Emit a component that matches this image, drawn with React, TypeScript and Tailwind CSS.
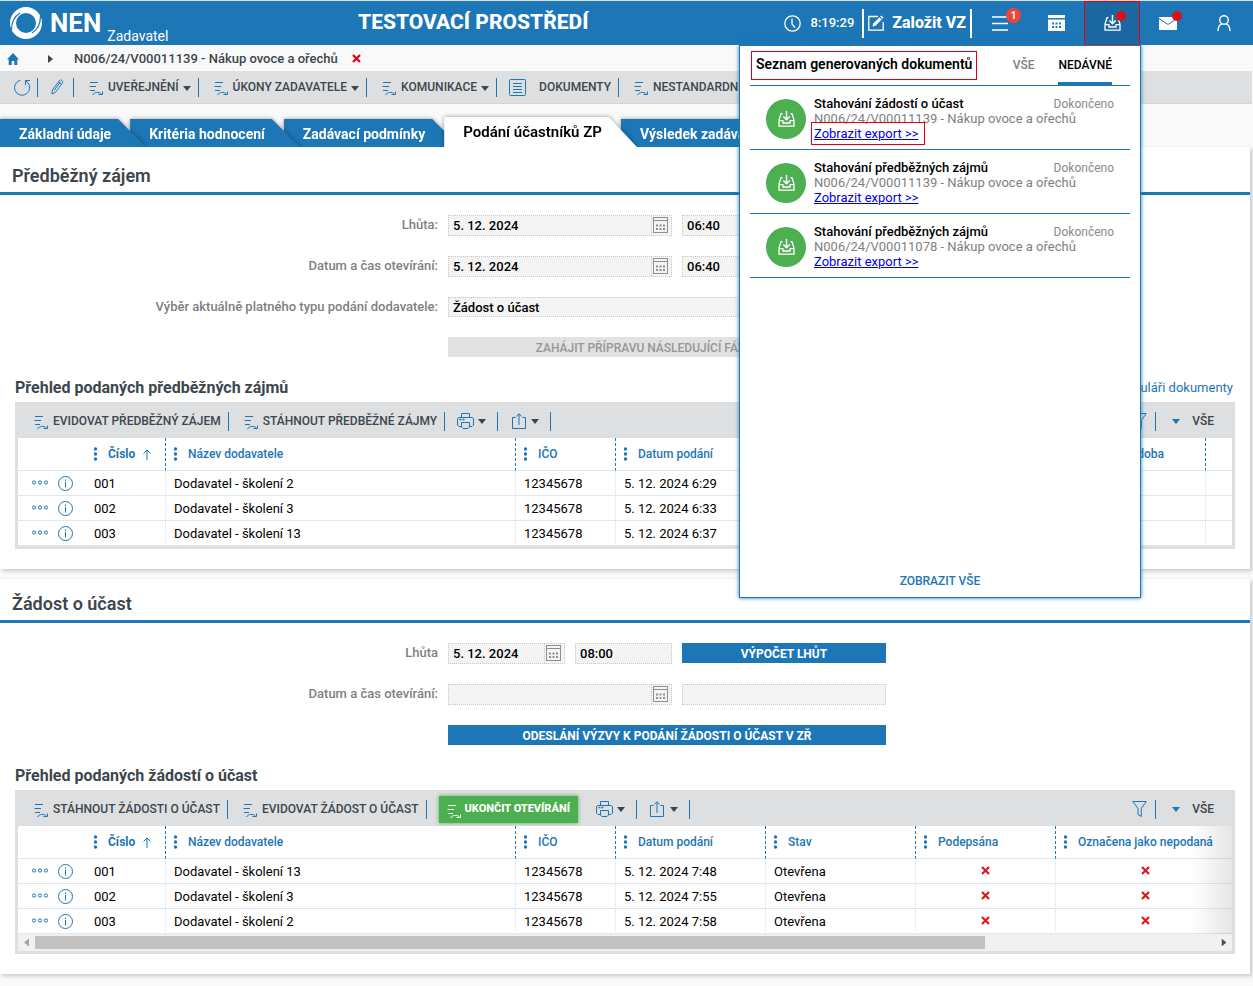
import React from 'react';
import { clsx } from 'clsx';

type IconProps = { className?: string };

const tabs = [
    { label: 'Základní údaje', layer: 'z-30' },
    { label: 'Kritéria hodnocení', layer: 'z-20' },
    { label: 'Zadávací podmínky', layer: 'z-10' },
    { label: 'Podání účastníků ZP', layer: 'z-40', active: true },
    { label: 'Výsledek zadávacího postupu', layer: 'z-0' },
];

const exportsList = [
    { title: 'Stahování žádostí o účast', subject: 'N006/24/V00011139 - Nákup ovoce a ořechů', marked: true },
    { title: 'Stahování předběžných zájmů', subject: 'N006/24/V00011139 - Nákup ovoce a ořechů', marked: false },
    { title: 'Stahování předběžných zájmů', subject: 'N006/24/V00011078 - Nákup ovoce a ořechů', marked: false },
];

const interestRows = [
    ['001', 'Dodavatel - školení 2', '12345678', '5. 12. 2024 6:29'],
    ['002', 'Dodavatel - školení 3', '12345678', '5. 12. 2024 6:33'],
    ['003', 'Dodavatel - školení 13', '12345678', '5. 12. 2024 6:37'],
];

const requestRows = [
    ['001', 'Dodavatel - školení 13', '12345678', '5. 12. 2024 7:48', 'Otevřena', 'x', 'x'],
    ['002', 'Dodavatel - školení 3', '12345678', '5. 12. 2024 7:55', 'Otevřena', 'x', 'x'],
    ['003', 'Dodavatel - školení 2', '12345678', '5. 12. 2024 7:58', 'Otevřena', 'x', 'x'],
];

/* Icons */

function LogoIcon() {
    return (
        <svg className="size-8 shrink-0" viewBox="0 0 32 32" fill="none">
            <circle cx="16" cy="16" r="13" stroke="#fff" strokeWidth="6" />
            <path d="M1.500 23C1.500 15 4 9.500 10 6" stroke="#1d76b5" strokeWidth="1.200" />
            <path d="M30.500 9C30.500 17 28 22.500 22 26" stroke="#1d76b5" strokeWidth="1.200" />
        </svg>
    );
}

function ProcessIcon({ className }: IconProps) {
    return (
        <svg className={clsx('h-[15px] w-[14px] shrink-0', className)} viewBox="0 0 14 15" fill="none" stroke="currentColor">
            <path d="M1 1.500H9M.5 5.500H7M1 9.500H6" />
            <path d="M3.500 14C5 11 10 10.500 12.500 13" />
            <path d="M13.500 10.500V13.500H9.500" />
        </svg>
    );
}

function Caret({ className }: IconProps) {
    return (
        <svg className={clsx('h-[5px] w-2 shrink-0', className)} viewBox="0 0 8 5" fill="currentColor">
            <path d="M0 0H8L4 5Z" />
        </svg>
    );
}

function CrossIcon({ className }: IconProps) {
    return (
        <svg className={clsx('size-[9px]', className)} viewBox="0 0 9 9" stroke="currentColor" strokeWidth="2.200">
            <path d="M1 1L8 8M8 1L1 8" />
        </svg>
    );
}

function TrayIcon({ className }: IconProps) {
    return (
        <svg className={clsx('h-4 w-[17px]', className)} viewBox="0 0 17 16" fill="none" stroke="currentColor" strokeWidth="1.300">
            <path d="M4.500 2.700H3L1 9V15.200H16V9L14 2.700H12.500" />
            <path d="M1 9.700H5V12H12V9.700H16" />
            <path d="M8.500 0V8.500M5.300 5.500L8.500 8.700L11.700 5.500" strokeWidth="1.500" />
        </svg>
    );
}

function ClockIcon() {
    return (
        <svg className="size-[17px]" viewBox="0 0 17 17" fill="none" stroke="currentColor" strokeWidth="1.300">
            <circle cx="8.500" cy="8.500" r="7.700" />
            <path d="M8 3.500V9L11 12.500" />
        </svg>
    );
}

function ComposeIcon() {
    return (
        <svg className="size-4" viewBox="0 0 16 16" fill="none" stroke="currentColor">
            <path d="M10 1.500H.8V15.200H15.200V7" strokeWidth="1.300" />
            <path d="M4.500 11.500L5.200 8.500L11.500 2.200L13.800 4.500L7.500 10.800Z" fill="currentColor" stroke="none" />
            <path d="M12.200 1.500L13.300 .5L15.500 2.700L14.500 3.800Z" fill="currentColor" stroke="none" />
        </svg>
    );
}

function PrinterIcon() {
    return (
        <svg className="h-4 w-[17px]" viewBox="0 0 17 16" fill="none" stroke="currentColor">
            <path d="M4.500 4V.5H12.500V4" />
            <path d="M4.500 13.500H2L.5 12V5.500L2 4.500H15L16.500 5.500V12L15 13.500H12.500" />
            <path d="M4.500 9.500H12.500V14L11 15.500H6L4.500 14Z" />
            <path d="M2.500 6.500H4.500M5.500 6.500H7.500" strokeWidth="1.500" />
        </svg>
    );
}

function ShareIcon() {
    return (
        <svg className="h-4 w-[14px]" viewBox="0 0 14 16" fill="none" stroke="currentColor">
            <path d="M3.500 4.500H.5V15.500H13.500V4.500H10.500" />
            <path d="M7 12V1M4.500 3.500L7 .7L9.500 3.500" />
        </svg>
    );
}

function FilterIcon() {
    return (
        <svg className="h-4 w-[15px]" viewBox="0 0 15 16" fill="none" stroke="currentColor">
            <path d="M.8 .5H14.200L9.300 7.500V15.500L6 13.500V7.500Z" />
        </svg>
    );
}

function DotsIcon() {
    return (
        <svg className="h-[14px] w-1 shrink-0" viewBox="0 0 4 14" fill="currentColor">
            <circle cx="1.500" cy="2" r="1.700" />
            <circle cx="1.500" cy="7" r="1.700" />
            <circle cx="1.500" cy="12" r="1.700" />
        </svg>
    );
}

function CalendarIcon() {
    return (
        <svg className="h-4 w-[15px]" viewBox="0 0 15 16" fill="none" stroke="#8f8f8f">
            <rect x=".5" y=".5" width="14" height="15" />
            <path d="M0 3.500H15" />
            <path d="M3 8.500H12M3 12H12" strokeWidth="2" strokeDasharray="2 1.500" />
        </svg>
    );
}

/* Header */

function HeaderCell({ label, children }: { label: string; children: React.ReactNode }) {
    return (
        <button type="button" aria-label={label} className="flex h-full w-14 items-center justify-center">
            <span className="relative">{children}</span>
        </button>
    );
}

function ExportsPanel() {
    return (
        <div className="absolute top-full -right-px z-50 flex h-[553px] w-[402px] flex-col border border-[#1d76b5] bg-white px-[10px] text-black shadow-[0_0_4px_#1d76b5]">
            <div className="flex h-10 items-start border-b border-[#1d76b5]">
                <h2 className="mt-[5px] ml-px h-[29px] border border-red-600 px-1 text-sm leading-6 font-semibold whitespace-nowrap">
                    Seznam generovaných dokumentů
                </h2>
                <div className="mr-[18px] ml-auto flex gap-6 text-xs font-medium">
                    <button type="button" className="h-[39px] pb-px text-[#808080]">VŠE</button>
                    <button type="button" className="h-[39px] border-b-3 border-[#1d76b5] pt-[2px]">NEDÁVNÉ</button>
                </div>
            </div>
            <ul>
                {exportsList.map((item, index) => (
                    <li key={index} className="flex h-16 items-center gap-2 border-b border-[#1d76b5] px-4 pt-[2px] text-[13px] leading-[15px]">
                        <span className="flex size-10 shrink-0 items-center justify-center rounded-full bg-[#4caf50] text-white">
                            <TrayIcon />
                        </span>
                        <div className="flex-1">
                            <div className="flex justify-between">
                                <span className="font-medium">{item.title}</span>
                                <span className="text-xs leading-4 text-[#8a8a8a]">Dokončeno</span>
                            </div>
                            <p className="-mt-px text-[#808080]">{item.subject}</p>
                            <a href="#export" className="relative text-[#0000ee] underline">
                                Zobrazit export &gt;&gt;
                                {item.marked && <span className="absolute -top-1 -right-[6px] -bottom-1 -left-[3px] border border-red-600" />}
                            </a>
                        </div>
                    </li>
                ))}
            </ul>
            <a href="#all" className="mt-auto mb-2 text-center text-xs font-medium text-[#1d76b5]">
                ZOBRAZIT VŠE
            </a>
        </div>
    );
}

function Header() {
    return (
        <header className="flex h-[45px] items-center border-t border-[#dedfe1] bg-[#1d76b5] pr-px text-white">
            <div className="flex h-full w-[358px] shrink-0 items-center pl-[10px]">
                <LogoIcon />
                <span className="mt-px ml-2 text-[26px] font-bold">NEN</span>
                <span className="mt-[26px] ml-[6px] text-sm">Zadavatel</span>
            </div>
            <h1 className="text-[21px] font-extrabold">TESTOVACÍ PROSTŘEDÍ</h1>
            <div className="ml-auto flex h-full items-center">
                <ClockIcon />
                <time className="ml-[10px] text-[13px] font-medium">8:19:29</time>
                <button type="button" className="ml-2 flex h-[29px] items-center gap-2 border-x-2 border-white px-1 text-base font-extrabold">
                    <ComposeIcon />
                    Založit VZ
                </button>
                <HeaderCell label="Nabídka">
                    <svg className="h-[15px] w-4" viewBox="0 0 16 15" stroke="currentColor" strokeWidth="1.300">
                        <path d="M0 1H16M0 7.500H16M0 14H16" />
                    </svg>
                    <span className="absolute -top-2 left-[14px] flex size-[15px] items-center justify-center rounded-full bg-[#f44336] text-[10px] font-bold">1</span>
                </HeaderCell>
                <HeaderCell label="Kalendář">
                    <svg className="h-4 w-[17px]" viewBox="0 0 17 16" fill="currentColor">
                        <path d="M0 0H17V3H0ZM0 4.500H17V16H0Z" />
                        <path d="M4 8.500H13M4 12H13" stroke="#1d76b5" strokeWidth="2" strokeDasharray="2 1.500" />
                    </svg>
                </HeaderCell>
                <div className="relative h-full w-14">
                    <button type="button" aria-label="Dokumenty" className="flex h-full w-full items-center justify-center border border-red-600 bg-[#1a689f]">
                        <span className="relative">
                            <TrayIcon />
                            <span className="absolute -top-1 left-3 size-[10px] rounded-full bg-[#dd1111]" />
                        </span>
                    </button>
                    <ExportsPanel />
                </div>
                <HeaderCell label="Zprávy">
                    <svg className="h-[13px] w-[18px]" viewBox="0 0 18 13" fill="currentColor">
                        <path d="M0 0H18V13H0Z" />
                        <path d="M0 1.500L9 7.500L18 1.500" fill="none" stroke="#1d76b5" />
                    </svg>
                    <span className="absolute -top-[6px] left-[13px] size-[10px] rounded-full bg-[#dd1111]" />
                </HeaderCell>
                <HeaderCell label="Uživatel">
                    <svg className="h-4 w-[14px]" viewBox="0 0 14 16" fill="none" stroke="currentColor" strokeWidth="1.400">
                        <circle cx="7" cy="5" r="4.300" />
                        <path d="M1 16C1 11.500 3 9.500 5 8.800M13 16C13 11.500 11 9.500 9 8.800" />
                    </svg>
                </HeaderCell>
            </div>
        </header>
    );
}

/* Toolbars */

function Divider() {
    return <span className="h-[19px] w-px shrink-0 bg-[#1d76b5]" />;
}

function ToolbarAction({ label, menu }: { label: string; menu?: boolean }) {
    return (
        <>
            <button type="button" className="flex shrink-0 items-center pr-[7px] pl-[15px] whitespace-nowrap">
                <ProcessIcon className="mt-[2px] mr-[5px] text-[#1d76b5]" />
                <span>{label}</span>
                {menu && <Caret className="mt-[2px] ml-1" />}
            </button>
            <Divider />
        </>
    );
}

function ToolbarMenu({ label, icon }: { label: string; icon: React.ReactNode }) {
    return (
        <>
            <button type="button" aria-label={label} className="flex shrink-0 items-center gap-1 pr-[11px] pl-3">
                <span className="flex w-[17px] justify-center text-[#1d76b5]">{icon}</span>
                <Caret />
            </button>
            <Divider />
        </>
    );
}

function MainToolbar() {
    return (
        <div className="mr-px flex h-[33px] items-center overflow-hidden border-b border-[#d4d5d7] bg-[#dedfe1] text-xs font-medium">
            <button type="button" aria-label="Obnovit" className="pr-[6px] pl-[14px] text-[#1d76b5]">
                <svg className="size-[17px]" viewBox="0 0 17 17" fill="none" stroke="currentColor">
                    <path d="M6.500 1.200A7.600 7.600 0 1 0 13.500 3.300" />
                    <path d="M16 1.500H11.500V6M11.500 1.500L13.500 3.500" />
                </svg>
            </button>
            <Divider />
            <button type="button" aria-label="Upravit" className="pr-[9px] pl-[13px] text-[#1d76b5]">
                <svg className="h-4 w-[13px]" viewBox="0 0 13 16" fill="none" stroke="currentColor">
                    <path d="M1 15L1.300 11L8.500 1.500C9.500 .2 12.500 1.800 11.500 3.800L4.500 13.300Z" />
                    <path d="M3 11.500L9 3.500M7.500 3L10.500 5" />
                </svg>
            </button>
            <Divider />
            <ToolbarAction label="UVEŘEJNĚNÍ" menu />
            <ToolbarAction label="ÚKONY ZADAVATELE" menu />
            <ToolbarAction label="KOMUNIKACE" menu />
            <button type="button" className="flex shrink-0 items-center gap-[13px] pr-[7px] pl-3">
                <svg className="size-[17px] text-[#1d76b5]" viewBox="0 0 17 17" fill="none" stroke="currentColor">
                    <rect x=".5" y=".5" width="16" height="16" rx="1" />
                    <path d="M4 4.500H13M4 7.500H13M4 10.500H13M4 13.500H13" />
                </svg>
                DOKUMENTY
            </button>
            <Divider />
            <ToolbarAction label="NESTANDARDNÍ UKONČENÍ" menu />
        </div>
    );
}

function Tabs() {
    return (
        <div className="flex h-[43px] items-end overflow-hidden">
            {tabs.map((tab) => (
                <button
                    key={tab.label}
                    type="button"
                    className={clsx(
                        'relative -ml-4 shrink-0 whitespace-nowrap drop-shadow-[0_0_2px_rgba(0,0,0,0.4)] first:ml-0',
                        tab.layer
                    )}
                >
                    <span
                        className={clsx(
                            'flex items-center pr-[35px] pl-[19px] [clip-path:polygon(0_0,calc(100%_-_28px)_0,100%_100%,0_100%)]',
                            tab.active ? 'h-[30px] bg-white text-[15px] font-semibold text-black' : 'h-7 bg-[#1d76b5] pt-[2px] text-sm font-bold text-white'
                        )}
                    >
                        {tab.label}
                    </span>
                </button>
            ))}
        </div>
    );
}

/* Form */

function Row({ label, htmlFor, children }: { label?: string; htmlFor?: string; children: React.ReactNode }) {
    return (
        <div className="flex gap-[10px]">
            <label htmlFor={htmlFor} className="w-[438px] text-right text-[13px] leading-5 font-medium text-[#808080]">
                {label}
            </label>
            <div className="flex w-[438px] gap-[10px]">{children}</div>
        </div>
    );
}

function DateField({ id, value, className }: { id: string; value: string; className: string }) {
    return (
        <div className={clsx('flex h-[21px] border border-dotted border-[#c8c8c8] bg-[#f4f4f4]', className)}>
            <input id={id} readOnly defaultValue={value} className="w-0 flex-1 px-1 text-[13px] font-medium text-black outline-none" />
            <button type="button" aria-label="Vybrat datum" className="flex w-5 items-start border-l border-dotted border-[#c8c8c8] pt-px pl-px">
                <CalendarIcon />
            </button>
        </div>
    );
}

function TimeField({ label, value, className }: { label: string; value: string; className: string }) {
    return (
        <input
            aria-label={label}
            readOnly
            defaultValue={value}
            className={clsx('h-[21px] border border-dotted border-[#c8c8c8] bg-[#f4f4f4] px-1 text-[13px] font-medium text-black outline-none', className)}
        />
    );
}

/* Grid */

type Column = { label: string; width?: string; center?: boolean };

const baseColumns: Column[] = [
    { label: 'Číslo', width: 'w-20' },
    { label: 'Název dodavatele', width: 'w-[350px]' },
    { label: 'IČO', width: 'w-[100px]' },
    { label: 'Datum podání', width: 'w-[150px]' },
    { label: 'Stav', width: 'w-[150px]' },
    { label: 'Podepsána', width: 'w-[140px]', center: true },
];

const interestColumns: Column[] = [...baseColumns, { label: 'Listinná podoba', width: 'w-[150px]' }, { label: '' }];
const requestColumns: Column[] = [...baseColumns, { label: 'Označena jako nepodaná', width: 'w-[180px]', center: true }];

function DataTable({ columns, rows }: { columns: Column[]; rows: string[][] }) {
    return (
        <table className="w-full table-fixed border-separate border-spacing-0 bg-white">
            <thead className="text-left text-xs text-[#1d76b5]">
                <tr>
                    <th className="h-[33px] w-[68px] border-b border-[#dfe8ee]" />
                    {columns.map((column, index) => (
                        <th
                            key={index}
                            className={clsx(
                                'h-[33px] border-b border-b-[#dfe8ee] p-0 pl-2 font-medium whitespace-nowrap',
                                column.width,
                                column.label && 'border-r border-r-[#1d76b5] [border-right-style:dashed]'
                            )}
                        >
                            {column.label && (
                                <div className="flex items-center">
                                    <DotsIcon />
                                    <span className={clsx('ml-[10px]', index === 0 && 'font-bold')}>{column.label}</span>
                                    {index === 0 && (
                                        <svg className="ml-2 h-[11px] w-2" viewBox="0 0 8 11" fill="none" stroke="currentColor">
                                            <path d="M4 11V1M.5 4.500L4 1L7.500 4.500" />
                                        </svg>
                                    )}
                                </div>
                            )}
                        </th>
                    ))}
                </tr>
            </thead>
            <tbody className="text-[13px] text-black">
                {rows.map((row) => (
                    <tr key={row[0]}>
                        <td className="h-[25px] border-b border-[#dfe8ee] p-0 pl-[13px] text-[#1d76b5]">
                            <div className="flex items-center gap-[9px]">
                                <svg className="mb-px h-[5px] w-[18px]" viewBox="0 0 18 5" fill="none" stroke="currentColor">
                                    <circle cx="3" cy="2.500" r="1.600" />
                                    <circle cx="9" cy="2.500" r="1.600" />
                                    <circle cx="15" cy="2.500" r="1.600" />
                                </svg>
                                <svg className="size-[15px]" viewBox="0 0 15 15" fill="none" stroke="currentColor">
                                    <circle cx="7.500" cy="7.500" r="7" />
                                    <path d="M7.500 6V11.500M7.500 3.500V5" />
                                </svg>
                            </div>
                        </td>
                        {columns.map((column, index) => (
                            <td
                                key={index}
                                className={clsx(
                                    'h-[25px] border-b border-b-[#dfe8ee] p-0 leading-5',
                                    column.center ? 'pb-[2px]' : 'pt-[2px] pl-2',
                                    column.label && 'border-r border-r-[#d8dde0] [border-right-style:dotted]'
                                )}
                            >
                                {row[index] === 'x' ? <CrossIcon className="mx-auto text-[#dd1a1a]" /> : row[index]}
                            </td>
                        ))}
                    </tr>
                ))}
            </tbody>
        </table>
    );
}

function GridToolbar({ children }: { children: React.ReactNode }) {
    return (
        <div className="flex h-9 items-center pt-[2px] pl-px text-xs font-medium">
            {children}
            <ToolbarMenu label="Tisk" icon={<PrinterIcon />} />
            <ToolbarMenu label="Export" icon={<ShareIcon />} />
            <button type="button" aria-label="Filtr" className="mr-2 ml-auto text-[#1d76b5]">
                <FilterIcon />
            </button>
            <Divider />
            <button type="button" className="flex items-center gap-3 pr-[18px] pl-4">
                <Caret className="text-[#1d76b5]" />
                VŠE
            </button>
        </div>
    );
}

function GridHeading({ title, children }: { title: string; children?: React.ReactNode }) {
    return (
        <div className="flex justify-between pt-[21px] pr-[2px] pb-1 leading-5">
            <h3 className="text-base leading-5 font-bold">{title}</h3>
            {children}
        </div>
    );
}

const primaryButton = 'h-5 bg-[#1d76b5] pt-px text-xs font-bold text-white';
const cardClass = 'bg-white shadow-[2px_2px_4px_rgba(0,0,0,0.2)]';

export default function App() {
    return (
        <div className="min-h-screen bg-[#f9f9f9] font-[Roboto,sans-serif] text-[#3d464d]">
            <Header />
            <nav className="flex h-[26px] items-center pt-px pl-[7px] text-[13px] font-medium">
                <a href="#home" aria-label="Domů" className="text-[#1d76b5]">
                    <svg className="size-3" viewBox="0 0 12 12" fill="currentColor">
                        <path d="M6 0L12 6.500H10.300V12H7.300V8H4.700V12H1.700V6.500H0Z" />
                    </svg>
                </a>
                <svg className="ml-[29px] h-2 w-[5px]" viewBox="0 0 5 8" fill="currentColor">
                    <path d="M0 0L5 4L0 8Z" />
                </svg>
                <span className="ml-[21px]">N006/24/V00011139 - Nákup ovoce a ořechů</span>
                <button type="button" aria-label="Zavřít" className="ml-[14px] text-red-600">
                    <CrossIcon />
                </button>
            </nav>
            <MainToolbar />
            <Tabs />

            <main className="flex flex-col gap-[10px] pr-[3px] pb-3">
                <section className={cardClass}>
                    <h2 className="h-12 border-b-3 border-[#1d76b5] pt-[17px] pl-3 text-lg leading-6 font-semibold">Předběžný zájem</h2>
                    <div className="flex flex-col gap-5 pt-5">
                        <Row label="Lhůta:" htmlFor="interest-date">
                            <DateField id="interest-date" value="5. 12. 2024" className="w-56" />
                            <TimeField label="Čas lhůty" value="06:40" className="w-[204px]" />
                        </Row>
                        <Row label="Datum a čas otevírání:" htmlFor="interest-open">
                            <DateField id="interest-open" value="5. 12. 2024" className="w-56" />
                            <TimeField label="Čas otevírání" value="06:40" className="w-[204px]" />
                        </Row>
                        <Row label="Výběr aktuálně platného typu podání dodavatele:" htmlFor="bid-type">
                            <select
                                id="bid-type"
                                className="h-5 w-full appearance-none border border-dotted border-[#c8c8c8] bg-[#f4f4f4] px-1 pt-px text-[13px] leading-4 font-medium text-black"
                            >
                                <option>Žádost o účast</option>
                            </select>
                        </Row>
                        <Row>
                            <button type="button" disabled className="h-5 w-full bg-[#e2e2e2] pt-px text-xs font-medium text-[#969696]">
                                ZAHÁJIT PŘÍPRAVU NÁSLEDUJÍCÍ FÁZE PODÁNÍ
                            </button>
                        </Row>
                    </div>
                    <div className="px-[15px] pb-5">
                        <GridHeading title="Přehled podaných předběžných zájmů">
                            <a href="#forms" className="text-[13px] text-[#1d76b5]">Zobrazit formuláři dokumenty</a>
                        </GridHeading>
                        <div className="border-x-3 border-b-3 border-[#dedfe1] bg-[#dedfe1]">
                            <GridToolbar>
                                <ToolbarAction label="EVIDOVAT PŘEDBĚŽNÝ ZÁJEM" />
                                <ToolbarAction label="STÁHNOUT PŘEDBĚŽNÉ ZÁJMY" />
                            </GridToolbar>
                            <DataTable columns={interestColumns} rows={interestRows} />
                        </div>
                    </div>
                </section>

                <section className={cardClass}>
                    <h2 className="h-11 border-b-3 border-[#1d76b5] pt-[13px] pl-3 text-lg leading-6 font-semibold">Žádost o účast</h2>
                    <div className="flex flex-col gap-5 pt-5">
                        <Row label="Lhůta" htmlFor="request-date">
                            <DateField id="request-date" value="5. 12. 2024" className="w-[117px]" />
                            <TimeField label="Čas lhůty žádosti" value="08:00" className="w-[97px]" />
                            <button type="button" className={clsx(primaryButton, 'w-[204px]')}>VÝPOČET LHŮT</button>
                        </Row>
                        <Row label="Datum a čas otevírání:" htmlFor="request-open">
                            <DateField id="request-open" value="" className="w-56" />
                            <TimeField label="Čas otevírání žádosti" value="" className="w-[204px]" />
                        </Row>
                        <Row>
                            <button type="button" className={clsx(primaryButton, 'w-full')}>
                                ODESLÁNÍ VÝZVY K PODÁNÍ ŽÁDOSTI O ÚČAST V ZŘ
                            </button>
                        </Row>
                    </div>
                    <div className="px-[15px] pb-5">
                        <GridHeading title="Přehled podaných žádostí o účast" />
                        <div className="border-x-3 border-b-3 border-[#dedfe1] bg-[#dedfe1]">
                            <GridToolbar>
                                <ToolbarAction label="STÁHNOUT ŽÁDOSTI O ÚČAST" />
                                <ToolbarAction label="EVIDOVAT ŽÁDOST O ÚČAST" />
                                <button
                                    type="button"
                                    className="mr-[6px] ml-3 flex h-[27px] shrink-0 items-center gap-1 bg-[#4caf50] px-2 text-[11px] font-extrabold text-white shadow-[0_0_4px_#4caf50]"
                                >
                                    <ProcessIcon className="mt-1" />
                                    UKONČIT OTEVÍRÁNÍ
                                </button>
                            </GridToolbar>
                            <div className="relative overflow-hidden">
                                <DataTable columns={requestColumns} rows={requestRows} />
                                <div className="pointer-events-none absolute inset-y-0 right-0 w-10 bg-linear-to-r from-transparent to-black/10" />
                            </div>
                            <div className="flex h-[17px] items-center bg-[#f1f1f1]">
                                <Caret className="mx-1 w-[9px] rotate-90 text-[#a3a3a3]" />
                                <div className="h-[13px] w-[calc(100%-264px)] bg-[#c1c1c1]" />
                                <Caret className="mr-1 ml-auto -rotate-90 text-[#505050]" />
                            </div>
                        </div>
                    </div>
                </section>
            </main>
        </div>
    );
}
